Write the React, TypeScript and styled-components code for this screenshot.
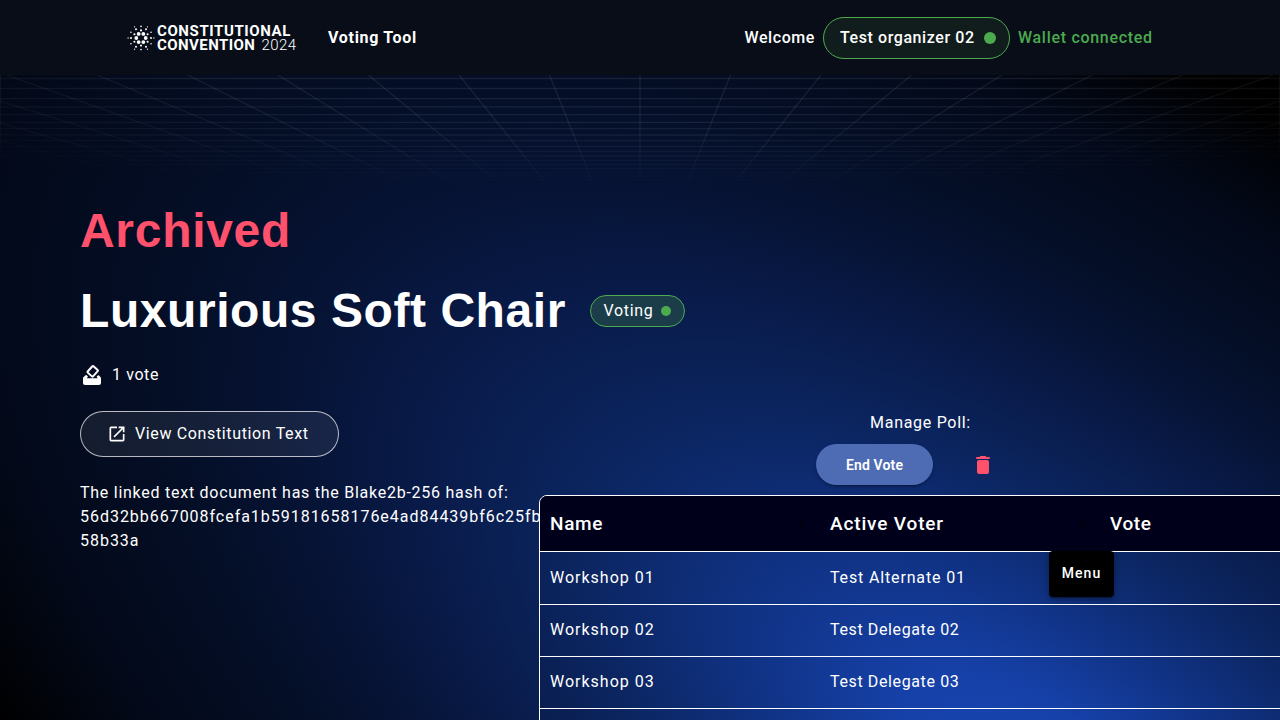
import React from "react";
import styled, { createGlobalStyle, css } from "styled-components";
import { MdLaunch, MdMoreVert } from "react-icons/md";

const GREEN = "#4caa4f";
const RED = "#ff506c";

const GlobalStyle = createGlobalStyle`
  *, *::before, *::after { box-sizing: border-box; }
  body { margin: 0; background: #000; }
`;

const Page = styled.div`
  position: relative;
  height: 720px;
  overflow: hidden;
  color: #fff;
  font-family: Roboto, "Liberation Sans", sans-serif;
  font-size: 16px;
  line-height: 24px;
  letter-spacing: 0.7px;
`;

const Backdrop = styled.div`
  position: absolute;
  inset: 0;
  overflow: hidden;
  background: #000;
`;

const Glow = styled.div`
  position: absolute;
  left: -414px;
  top: 102px;
  width: 2918px;
  height: 1376px;
  transform: rotate(35deg);
  background: radial-gradient(
    closest-side,
    #1745b2 0%,
    #1641a9 11%,
    #113489 22%,
    #0c2765 35%,
    #0a2054 43%,
    #091a48 50%,
    #061334 60%,
    #040e26 70%,
    #030919 85%,
    rgba(0, 0, 0, 0) 100%
  );
`;

const Floor = styled.svg`
  position: absolute;
  left: 0;
  top: 75px;
  width: 1280px;
  height: 112px;
  stroke: #fff;
  stroke-opacity: 0.08;
  stroke-width: 1.3;
  mask-image: radial-gradient(ellipse 1000px 116px at 640px 0, #000 40%, transparent 100%);
`;

const Header = styled.header`
  position: relative;
  display: flex;
  align-items: center;
  height: 75px;
  padding: 0 128px;
  background: #080d18;
`;

const Brand = styled.div`
  display: flex;
  align-items: center;
  width: 200px;
`;

const Burst = styled.svg`
  width: 28px;
  height: 28px;
  margin-left: -1px;
  margin-right: 2px;
  fill: #fff;
`;

const BrandName = styled.div`
  font-size: 15px;
  line-height: 14px;
  font-weight: 700;
  letter-spacing: 0.6px;
  white-space: nowrap;
`;

const BrandLine = styled.div<{ $tight?: boolean }>`
  ${(p) => p.$tight && css`letter-spacing: 0.43px;`}
`;

const Year = styled.span`
  margin-left: 2px;
  font-weight: 300;
`;

const ToolName = styled.div`
  font-weight: 700;
  letter-spacing: 0.7px;
`;

const Account = styled.div`
  display: flex;
  align-items: center;
  gap: 8px;
  margin-left: auto;
  font-weight: 500;
  letter-spacing: 0.58px;
  white-space: nowrap;
`;

const Chip = styled.div<{ $small?: boolean }>`
  display: flex;
  align-items: center;
  justify-content: space-between;
  border: 1px solid ${GREEN};
  ${(p) =>
    p.$small
      ? css`
          width: 95px;
          height: 32px;
          padding: 0 13px 0 12px;
          border-radius: 16px;
          background: #1b3d49;
        `
      : css`
          width: 187px;
          height: 42px;
          padding: 0 13px 0 16px;
          border-radius: 21px;
          background: #111d1c;
        `}
`;

const Dot = styled.span<{ $size: number }>`
  width: ${(p) => p.$size}px;
  height: ${(p) => p.$size}px;
  border-radius: 50%;
  background: ${GREEN};
`;

const WalletState = styled.span`
  width: 134px;
  color: ${GREEN};
  letter-spacing: 0.7px;
`;

const Main = styled.main`
  position: relative;
  padding: 128px 0 0 80px;
`;

const Heading = styled.h1<{ $alert?: boolean }>`
  margin: 0;
  font-family: "Liberation Sans", sans-serif;
  font-size: 48px;
  line-height: 56px;
  font-weight: 700;
  letter-spacing: ${(p) => (p.$alert ? 0.7 : 0.56)}px;
  color: ${(p) => (p.$alert ? RED : "#fff")};
`;

const TitleRow = styled.div`
  display: flex;
  align-items: center;
  gap: 24.5px;
  margin-top: 24px;
`;

const Columns = styled.div`
  display: flex;
  margin-top: 24px;
`;

const Details = styled.section`
  flex: none;
  width: 459px;
`;

const VoteCount = styled.div`
  display: flex;
  align-items: center;
  gap: 8px;
  letter-spacing: 0.6px;
`;

const TextButton = styled.button`
  display: flex;
  align-items: center;
  gap: 8px;
  width: 259px;
  height: 46px;
  margin: 24px 0;
  padding: 0 26px;
  border: 1px solid rgba(255, 255, 255, 0.7);
  border-radius: 23px;
  background: rgba(255, 255, 255, 0.07);
  color: #fff;
  font: inherit;
  letter-spacing: 0.64px;
  white-space: nowrap;
`;

const HashNote = styled.p`
  margin: 0;
  letter-spacing: 0.74px;
  white-space: nowrap;
`;

const Hash = styled.span`
  display: block;
  letter-spacing: 0.97px;
`;

const Manage = styled.section`
  flex: none;
  width: 763px;
  padding-top: 48px;
`;

const ManageLabel = styled.div`
  text-align: center;
`;

const Actions = styled.div`
  display: flex;
  align-items: center;
  justify-content: center;
  gap: 30px;
  margin: 9px 0 10px;
`;

const EndVote = styled.button`
  width: 117px;
  height: 41px;
  border: 0;
  border-radius: 21px;
  background: #4e6cb4;
  box-shadow: 0 3px 1px -2px rgba(0, 0, 0, 0.2), 0 2px 2px rgba(0, 0, 0, 0.14), 0 1px 5px rgba(0, 0, 0, 0.12);
  color: #fff;
  font: 600 14px Roboto, sans-serif;
  letter-spacing: 0.14px;
`;

const DeleteButton = styled.button`
  display: flex;
  margin-right: 22px;
  padding: 0 8px;
  border: 0;
  background: none;
  color: ${RED};
`;

const Icon = styled.svg`
  flex: none;
  width: 24px;
  height: 24px;
  fill: currentColor;
`;

const Table = styled.div`
  height: 400px;
  border: 1px solid #fff;
  border-radius: 8px;
  overflow: hidden;
`;

const Row = styled.div<{ $first?: boolean }>`
  display: flex;
  align-items: center;
  height: ${(p) => (p.$first ? 53 : 52)}px;
  padding-bottom: ${(p) => (p.$first ? 0 : 1)}px;
  border-bottom: 1px solid #fff;
`;

const HeadRow = styled(Row)`
  height: 56px;
  padding-bottom: 0;
  background: #00001a;
  font-size: 19px;
  font-weight: 500;
`;

const Cell = styled.div<{ $spacing?: number }>`
  display: flex;
  align-items: center;
  justify-content: space-between;
  flex: none;
  width: 280px;
  padding: 0 10px;
  letter-spacing: ${(p) => p.$spacing ?? 0.8}px;
`;

const ColumnMenu = styled(MdMoreVert)`
  color: #000;
`;

const MenuButton = styled.button`
  position: absolute;
  left: 1049px;
  top: 551px;
  width: 65px;
  height: 46px;
  padding: 0 0 2px;
  border: 0;
  border-radius: 4px;
  background: #000;
  box-shadow: 0 3px 1px -2px rgba(0, 0, 0, 0.2), 0 2px 2px rgba(0, 0, 0, 0.14), 0 2px 8px rgba(0, 0, 0, 0.3);
  color: #fff;
  font: 500 14px Roboto, sans-serif;
  letter-spacing: 1.1px;
`;

/* Horizon of the floor's perspective, relative to its top edge. */
const HORIZON = 225;
const RAYS = Array.from({ length: 41 }, (_, i) => 640 + (i - 20) * 90.5);
const LEVELS = [3.5, 13.5, 23.7, 31.9, 39.7, 47.3, 53.7, 60, 65.7, 71.3, 76.3, 81, 85.3, 89.6, 93.6, 97.3, 101, 104.5];

const RINGS = [
  { distance: 4.7, radius: 1.9, turn: 0 },
  { distance: 7.6, radius: 1.05, turn: 30 },
  { distance: 10, radius: 1, turn: 0 },
  { distance: 11.6, radius: 0.8, turn: 30 },
  { distance: 12.9, radius: 0.65, turn: 0 },
];

const voters = [
  { name: "Workshop 01", voter: "Test Alternate 01", spacing: 0.85 },
  { name: "Workshop 02", voter: "Test Delegate 02", spacing: 0.62 },
  { name: "Workshop 03", voter: "Test Delegate 03", spacing: 0.62 },
];

function BurstMark() {
  return (
    <Burst viewBox="-14 -14 28 28">
      {RINGS.map((ring) =>
        Array.from({ length: 6 }, (_, i) => {
          const angle = ((ring.turn + i * 60) * Math.PI) / 180;
          return (
            <circle
              key={`${ring.distance}-${i}`}
              cx={ring.distance * Math.cos(angle)}
              cy={ring.distance * Math.sin(angle)}
              r={ring.radius}
            />
          );
        }),
      )}
    </Burst>
  );
}

function BallotIcon() {
  return (
    <Icon viewBox="0 0 24 24">
      <rect
        x="9.1"
        y="4"
        width="7.2"
        height="8.600"
        rx="0.8"
        transform="rotate(42 12.7 8.300)"
        fill="none"
        stroke="currentColor"
        strokeWidth="2"
      />
      <path d="M5.200 12.600l1.300-.6 1.400 1.500-.9 1.700h10.600l-1-1.500 1.500-1.500 1 .4 1.500 1.700c.3.3.4.6.4 1V20c0 1.100-.9 2-2 2H5c-1.100 0-2-.9-2-2v-4.700c0-.4.1-.7.4-1z" />
    </Icon>
  );
}

function TrashIcon() {
  return (
    <Icon viewBox="0 0 24 24">
      <path d="M6 19c0 1.100.9 2 2 2h8c1.100 0 2-.9 2-2V9c0-1.100-.9-2-2-2H8c-1.100 0-2 .9-2 2zM18 4h-2.500l-.7-.7c-.2-.2-.4-.3-.7-.3H9.900c-.3 0-.5.1-.7.3l-.7.7H6a1 1 0 0 0 0 2h12a1 1 0 0 0 0-2z" />
    </Icon>
  );
}

function PerspectiveFloor() {
  return (
    <Floor viewBox="0 0 1280 112">
      {RAYS.map((x) => (
        <line key={x} x1={x} y1={0} x2={640} y2={HORIZON} />
      ))}
      {LEVELS.map((y) => (
        <line key={y} x1={0} y1={y} x2={1280} y2={y} />
      ))}
      <line x1={0.5} y1={0} x2={0.5} y2={112} />
      <line x1={1279.5} y1={0} x2={1279.5} y2={112} />
    </Floor>
  );
}

export default function App() {
  return (
    <Page>
      <GlobalStyle />
      <Backdrop>
        <Glow />
        <PerspectiveFloor />
      </Backdrop>
      <Header>
        <Brand>
          <BurstMark />
          <BrandName>
            <BrandLine>CONSTITUTIONAL</BrandLine>
            <BrandLine $tight>
              CONVENTION <Year>2024</Year>
            </BrandLine>
          </BrandName>
        </Brand>
        <ToolName>Voting Tool</ToolName>
        <Account>
          <span>Welcome</span>
          <Chip>
            Test organizer 02
            <Dot $size={12} />
          </Chip>
          <WalletState>Wallet connected</WalletState>
        </Account>
      </Header>
      <Main>
        <Heading $alert>Archived</Heading>
        <TitleRow>
          <Heading>Luxurious Soft Chair</Heading>
          <Chip $small>
            Voting
            <Dot $size={10} />
          </Chip>
        </TitleRow>
        <Columns>
          <Details>
            <VoteCount>
              <BallotIcon />1 vote
            </VoteCount>
            <TextButton>
              <MdLaunch size={20} />
              View Constitution Text
            </TextButton>
            <HashNote>
              The linked text document has the Blake2b-256 hash of:
              <Hash>56d32bb667008fcefa1b59181658176e4ad84439bf6c25fb</Hash>
              <Hash>58b33a</Hash>
            </HashNote>
          </Details>
          <Manage>
            <ManageLabel>Manage Poll:</ManageLabel>
            <Actions>
              <EndVote>End Vote</EndVote>
              <DeleteButton aria-label="Delete poll">
                <TrashIcon />
              </DeleteButton>
            </Actions>
            <Table>
              <HeadRow>
                <Cell $spacing={0.7}>
                  Name
                  <ColumnMenu size={16} />
                </Cell>
                <Cell $spacing={0.85}>
                  Active Voter
                  <ColumnMenu size={16} />
                </Cell>
                <Cell $spacing={0.6}>Vote</Cell>
              </HeadRow>
              {voters.map((v, i) => (
                <Row key={v.name} $first={i === 0}>
                  <Cell $spacing={1}>{v.name}</Cell>
                  <Cell $spacing={v.spacing}>{v.voter}</Cell>
                </Row>
              ))}
            </Table>
          </Manage>
        </Columns>
      </Main>
      <MenuButton>Menu</MenuButton>
    </Page>
  );
}
